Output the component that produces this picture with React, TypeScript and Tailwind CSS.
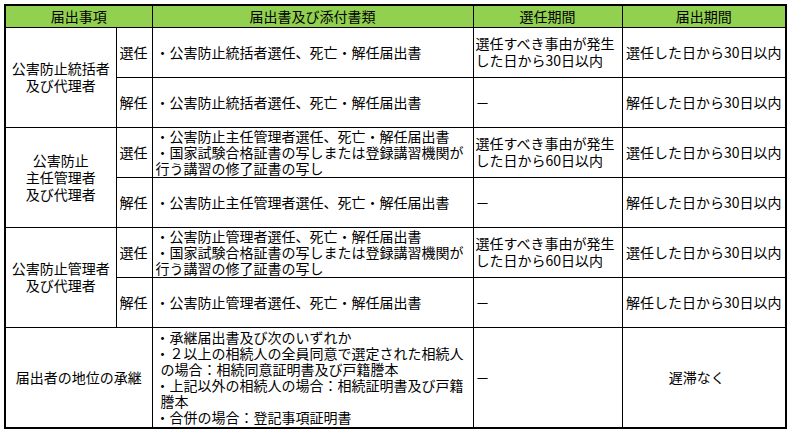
import React from "react";

const font = { fontFamily: '"Noto Sans CJK JP", "Noto Sans", sans-serif' };

type Group = {
  title: string[];
  selDocs: string[];
  disDoc: string;
  selPeriod: string[];
};

const groups: Group[] = [
  {
    title: ["公害防止統括者", "及び代理者"],
    selDocs: ["・公害防止統括者選任、死亡・解任届出書"],
    disDoc: "・公害防止統括者選任、死亡・解任届出書",
    selPeriod: ["選任すべき事由が発生", "した日から30日以内"],
  },
  {
    title: ["公害防止", "主任管理者", "及び代理者"],
    selDocs: [
      "・公害防止主任管理者選任、死亡・解任届出書",
      "・国家試験合格証書の写しまたは登録講習機関が",
      "行う講習の修了証書の写し",
    ],
    disDoc: "・公害防止主任管理者選任、死亡・解任届出書",
    selPeriod: ["選任すべき事由が発生", "した日から60日以内"],
  },
  {
    title: ["公害防止管理者", "及び代理者"],
    selDocs: [
      "・公害防止管理者選任、死亡・解任届出書",
      "・国家試験合格証書の写しまたは登録講習機関が",
      "行う講習の修了証書の写し",
    ],
    disDoc: "・公害防止管理者選任、死亡・解任届出書",
    selPeriod: ["選任すべき事由が発生", "した日から60日以内"],
  },
];

const td = "border border-black align-middle p-0";

function Lines({ items }: { items: string[] }) {
  return (
    <>
      {items.map((t, i) => (
        <div key={i} className="whitespace-nowrap">
          {t}
        </div>
      ))}
    </>
  );
}

export default function App() {
  return (
    <div className="w-[793px] h-[432px] bg-white pt-[4px] pl-[4px] overflow-hidden" style={font}>
      <table className="border-collapse table-fixed border-2 border-black w-[783px] text-[14px] leading-[17px] text-black">
        <colgroup>
          <col className="w-[111px]" />
          <col className="w-[36px]" />
          <col className="w-[321px]" />
          <col className="w-[149px]" />
          <col className="w-[164px]" />
        </colgroup>
        <tbody>
          <tr className="h-[22px] bg-[#92d050]">
            <td colSpan={2} className={`${td} text-center`}>届出事項</td>
            <td className={`${td} text-center`}>届出書及び添付書類</td>
            <td className={`${td} text-center`}>選任期間</td>
            <td className={`${td} text-center`}>届出期間</td>
          </tr>
          {groups.map((g, gi) => (
            <React.Fragment key={gi}>
              <tr className="h-[50px]">
                <td rowSpan={2} className={`${td} text-center`}>
                  <Lines items={g.title} />
                </td>
                <td className={`${td} pl-[3px]`}>選任</td>
                <td className={`${td} pl-[3px] leading-[16px]`}>
                  <Lines items={g.selDocs} />
                </td>
                <td className={`${td} pl-[2px]`}>
                  <Lines items={g.selPeriod} />
                </td>
                <td className={`${td} text-center`}>選任した日から30日以内</td>
              </tr>
              <tr className="h-[50px]">
                <td className={`${td} pl-[3px]`}>解任</td>
                <td className={`${td} pl-[3px]`}>{g.disDoc}</td>
                <td className={`${td} pl-[2px]`}>－</td>
                <td className={`${td} text-center`}>解任した日から30日以内</td>
              </tr>
            </React.Fragment>
          ))}
          <tr className="h-[101px]">
            <td colSpan={2} className={`${td} text-center`}>届出者の地位の承継</td>
            <td className={`${td} pl-[3px] leading-[16px]`}>
              <div>・承継届出書及び次のいずれか</div>
              <div>・２以上の相続人の全員同意で選定された相続人</div>
              <div className="pl-[5px]">の場合：相続同意証明書及び戸籍謄本</div>
              <div>・上記以外の相続人の場合：相続証明書及び戸籍</div>
              <div className="pl-[5px]">謄本</div>
              <div>・合併の場合：登記事項証明書</div>
            </td>
            <td className={`${td} pl-[2px]`}>－</td>
            <td className={`${td} text-center pr-[14px]`}>遅滞なく</td>
          </tr>
        </tbody>
      </table>
    </div>
  );
}
